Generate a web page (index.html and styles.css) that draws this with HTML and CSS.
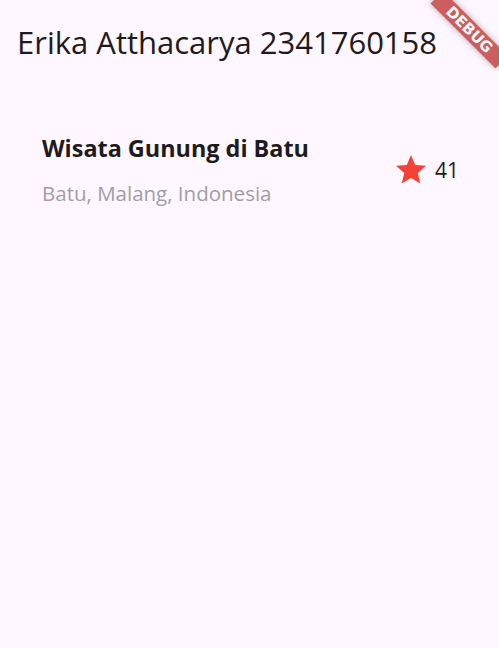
FILE: index.html
```html
<!DOCTYPE html>
<html>
<head>
<meta charset="utf-8">
<link rel="stylesheet" href="styles.css">
</head>
<body>
<header class="appbar"><h1 class="appbar-title">Erika Atthacarya 2341760158</h1></header>
<main class="content">
  <section class="title-section">
    <div class="info">
      <div class="name">Wisata Gunung di Batu</div>
      <div class="place">Batu, Malang, Indonesia</div>
    </div>
    <svg class="star" viewBox="0 0 24 24" width="36" height="36"><path fill="#f44336" d="M12 17.27L18.18 21l-1.64-7.03L22 9.24l-7.19-.61L12 2 9.19 8.63 2 9.24l5.46 4.73L5.82 21z"/></svg>
    <span class="count">41</span>
  </section>
</main>
<div class="banner">DEBUG</div>
</body>
</html>
```
FILE: styles.css
```css
html, body { margin: 0; padding: 0; }
body {
  background: #fef7ff;
  width: 499px;
  height: 648px;
  overflow: hidden;
  position: relative;
  font-family: "Open Sans", "Noto Sans", sans-serif;
  color: #1d1b20;
}
.appbar {
  height: 84px;
  display: flex;
  align-items: center;
  padding-left: 17px;
}
.appbar-title {
  margin: 0;
  font-weight: 400;
  font-size: 31px;
  line-height: 1;
  color: #1d1b20;
}
.content { padding: 48px 40px 32px 42px; }
.title-section {
  display: flex;
  align-items: center;
}
.info { flex: 1; display: flex; flex-direction: column; }
.name {
  font-weight: 700;
  font-size: 23.4px;
  line-height: 32px;
  margin-bottom: 15px;
}
.place {
  font-size: 20.5px;
  line-height: 28px;
  color: #a09ea4;
}
.star { display: block; margin-right: 6px; }
.count { font-size: 21px; line-height: 30px; }
.banner {
  position: absolute;
  left: 453px;
  top: 33px;
  width: 92px;
  height: 18px;
  transform-origin: 46px -33px;
  transform: rotate(45deg);
  background: rgba(183, 28, 28, 0.7);
  box-shadow: 0 0 6px rgba(0,0,0,0.3);
  color: #fff;
  font-family: "DejaVu Sans", sans-serif;
  font-weight: 900;
  font-size: 15px;
  line-height: 18px;
  text-align: center;
}
```
